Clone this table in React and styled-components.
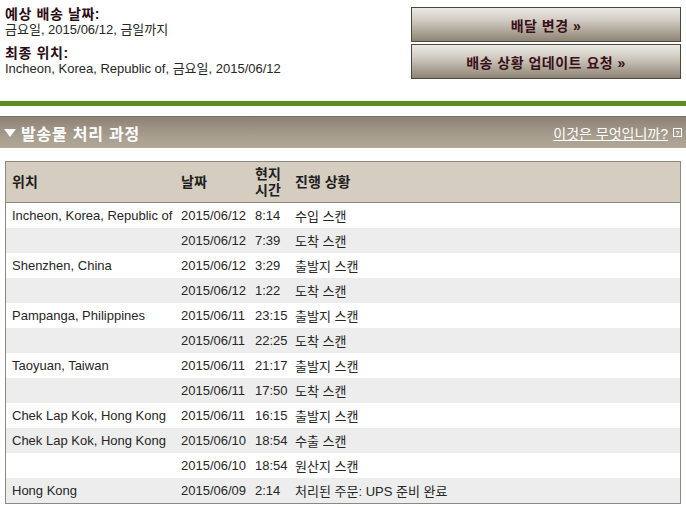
import React from 'react';
import styled, { createGlobalStyle } from 'styled-components';

const GlobalStyle = createGlobalStyle`
  html, body {
    margin: 0;
    padding: 0;
    background: #ffffff;
  }
  body {
    font-family: "Liberation Sans", Arial, "Noto Sans CJK KR", sans-serif;
    font-size: 13px;
    color: #222;
  }
`;

const Page = styled.div`
  width: 686px;
  height: 507px;
  overflow: hidden;
`;

const Summary = styled.div`
  display: flex;
  justify-content: space-between;
  padding: 6px 5px 0 5px;
  height: 101px;
  box-sizing: border-box;
`;

const Info = styled.div`
  display: flex;
  flex-direction: column;
  gap: 7px;
`;

const InfoGroup = styled.div`
  display: flex;
  flex-direction: column;
`;

const Label = styled.div`
  font-weight: bold;
  font-size: 14px;
  letter-spacing: 0.6px;
  line-height: 16px;
  color: #2a0d14;
`;

const Value = styled.div`
  font-size: 13px;
  line-height: 16px;
  color: #262626;
`;

const Buttons = styled.div`
  display: flex;
  flex-direction: column;
  gap: 2px;
  width: 270px;
  padding-top: 1px;
`;

const ActionButton = styled.button`
  height: 35px;
  width: 100%;
  border: 1px solid #4e463b;
  background: linear-gradient(to bottom, #ebe9e4 0%, #d3cec5 35%, #8e8474 100%);
  font-family: "Liberation Sans", "Noto Sans CJK KR", sans-serif;
  font-weight: bold;
  font-size: 14px;
  letter-spacing: 0.5px;
  color: #3a0f18;
  cursor: pointer;
  padding: 0;
`;

const GreenRule = styled.div`
  height: 5px;
  background: #5d8c1f;
`;

const SectionBar = styled.div`
  margin-top: 10px;
  height: 32px;
  display: flex;
  align-items: center;
  justify-content: space-between;
  border-top: 1px solid #7c7264;
  background: linear-gradient(to bottom, #8d8273 0%, #a79d8e 60%, #b1a898 100%);
  padding: 0 4px 0 3px;
  box-sizing: border-box;
`;

const SectionTitle = styled.div`
  display: flex;
  align-items: center;
  gap: 4px;
  color: #ffffff;
  font-weight: bold;
  font-size: 16px;
  letter-spacing: 0.8px;
`;

const HelpLink = styled.a`
  display: flex;
  align-items: center;
  gap: 5px;
  color: #ffffff;
  font-size: 14px;
  text-decoration: underline;
  cursor: pointer;
`;

const HelpBox = styled.span`
  display: inline-flex;
  align-items: center;
  justify-content: center;
  width: 7px;
  height: 7px;
  border: 1px solid #ffffff;
  font-size: 6px;
  font-weight: bold;
  line-height: 1;
`;

const TableWrap = styled.div`
  padding: 13px 5px 0 5px;
`;

const Table = styled.table`
  width: 676px;
  border-collapse: collapse;
  table-layout: fixed;
  border: 1px solid #8d887d;
`;

const HeadCell = styled.th`
  background: #d5cdc0;
  text-align: left;
  font-weight: bold;
  font-size: 14px;
  line-height: 16px;
  color: #1e1e1e;
  height: 40px;
  padding: 0 0 0 6px;
  border-bottom: 1px solid #8d887d;
  width: ${p => (p.$w ? p.$w + 'px' : 'auto')};
`;

const Row = styled.tr`
  background: ${p => (p.$alt ? '#ededed' : '#ffffff')};
`;

const Cell = styled.td`
  height: 25px;
  padding: 0 0 0 6px;
  font-size: 13px;
  color: #262626;
  white-space: nowrap;
  overflow: hidden;
`;

const rows = [
  ['Incheon, Korea, Republic of', '2015/06/12', '8:14', '수입 스캔'],
  ['', '2015/06/12', '7:39', '도착 스캔'],
  ['Shenzhen, China', '2015/06/12', '3:29', '출발지 스캔'],
  ['', '2015/06/12', '1:22', '도착 스캔'],
  ['Pampanga, Philippines', '2015/06/11', '23:15', '출발지 스캔'],
  ['', '2015/06/11', '22:25', '도착 스캔'],
  ['Taoyuan, Taiwan', '2015/06/11', '21:17', '출발지 스캔'],
  ['', '2015/06/11', '17:50', '도착 스캔'],
  ['Chek Lap Kok, Hong Kong', '2015/06/11', '16:15', '출발지 스캔'],
  ['Chek Lap Kok, Hong Kong', '2015/06/10', '18:54', '수출 스캔'],
  ['', '2015/06/10', '18:54', '원산지 스캔'],
  ['Hong Kong', '2015/06/09', '2:14', '처리된 주문: UPS 준비 완료'],
];

export default function App() {
  return (
    <Page>
      <GlobalStyle />
      <Summary>
        <Info>
          <InfoGroup>
            <Label>예상 배송 날짜:</Label>
            <Value>금요일, 2015/06/12, 금일까지</Value>
          </InfoGroup>
          <InfoGroup>
            <Label>최종 위치:</Label>
            <Value>Incheon, Korea, Republic of, 금요일, 2015/06/12</Value>
          </InfoGroup>
        </Info>
        <Buttons>
          <ActionButton>배달 변경 »</ActionButton>
          <ActionButton>배송 상황 업데이트 요청 »</ActionButton>
        </Buttons>
      </Summary>
      <GreenRule />
      <SectionBar>
        <SectionTitle>
          <svg width="14" height="10" viewBox="0 0 14 10">
            <path d="M1 1 L13 1 L7 9 Z" fill="#ffffff" />
          </svg>
          발송물 처리 과정
        </SectionTitle>
        <HelpLink>
          이것은 무엇입니까?
          <HelpBox>?</HelpBox>
        </HelpLink>
      </SectionBar>
      <TableWrap>
        <Table>
          <thead>
            <tr>
              <HeadCell $w={163}>위치</HeadCell>
              <HeadCell $w={68}>날짜</HeadCell>
              <HeadCell $w={34}>현지<br />시간</HeadCell>
              <HeadCell>진행 상황</HeadCell>
            </tr>
          </thead>
          <tbody>
            {rows.map((r, i) => (
              <Row key={i} $alt={i % 2 === 1}>
                <Cell>{r[0]}</Cell>
                <Cell>{r[1]}</Cell>
                <Cell>{r[2]}</Cell>
                <Cell>{r[3]}</Cell>
              </Row>
            ))}
          </tbody>
        </Table>
      </TableWrap>
    </Page>
  );
}
